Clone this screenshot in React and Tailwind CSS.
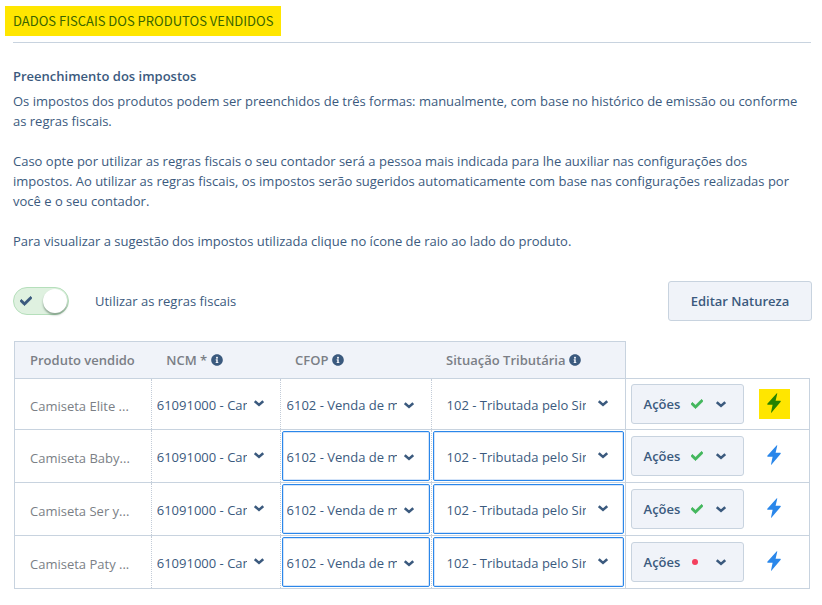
import React from 'react';
import { FaCheck, FaInfoCircle } from 'react-icons/fa';

const PRODUCTS = [
	{ name: 'Camiseta Elite ...', ok: true, focused: false },
	{ name: 'Camiseta Baby...', ok: true, focused: true },
	{ name: 'Camiseta Ser y...', ok: true, focused: true },
	{ name: 'Camiseta Paty ...', ok: false, focused: true },
];

const Chevron = ({ className = '' }) => (
	<svg
		viewBox="0 0 10 7"
		className={`w-[10px] h-[7px] ${className}`}
		fill="none"
		stroke="currentColor"
		strokeWidth="2.5"
	>
		<path d="M0.8 1.2 L5 4.9 L9.2 1.2" />
	</svg>
);

const Bolt = () => (
	<svg viewBox="0 0 14 20" className="w-[14px] h-5" fill="currentColor">
		<path d="M9.8 0.2 L0.3 10.8 Q0 11.6 0.8 11.8 H5.6 L4 19.6 Q4.2 20 4.6 19.6 L13.7 8.8 Q14 8 13.2 7.8 H8.6 L10.3 0.4 Q10.2 0 9.8 0.2 Z" />
	</svg>
);

const Check = ({ className }) => (
	<FaCheck className={`size-3 ${className}`} stroke="currentColor" strokeWidth="30" />
);

const HeaderCell = ({ children, info }) => (
	<th
		scope="col"
		className="bg-[#f0f3f9] border-y border-[#c8d3df] px-[15px] text-left font-semibold text-[#7b7f86]"
	>
		<span className="flex items-center gap-1 whitespace-nowrap">
			{children}
			{info && <FaInfoCircle className="size-3 text-[#3b5a7e]" />}
		</span>
	</th>
);

const CellSelect = ({ label, value, focused, className, chevron }) => (
	<div className="relative h-[50px]">
		<select
			aria-label={label}
			className={`appearance-none w-full h-full border bg-transparent outline-none overflow-hidden pt-[2px] ${className} ${
				focused
					? 'border-[#2a87ea] ring-1 ring-inset ring-[#d5e4f8] rounded-[2px]'
					: 'border-transparent'
			}`}
		>
			<option>{value}</option>
		</select>
		<Chevron className={`absolute right-4 pointer-events-none ${chevron}`} />
	</div>
);

const ProductRow = ({ product, highlighted }) => (
	<tr className={highlighted ? 'h-[51px]' : 'h-[53px]'}>
		<td className="border border-r-0 border-[#c8d3df] pl-[15px] pt-1 text-[#7b7f86] whitespace-nowrap">
			{product.name}
		</td>
		<td className="border-y border-l border-y-[#c8d3df] border-l-[#c3ccd8] [border-left-style:dotted]">
			<CellSelect
				label="NCM"
				value="61091000 - Camisetas"
				className="pl-1 pr-8"
				chevron="top-[21px]"
			/>
		</td>
		<td className="border-y border-l border-y-[#c8d3df] border-l-[#c3ccd8] [border-left-style:dotted] px-px">
			<CellSelect
				label="CFOP"
				value="6102 - Venda de mercadoria"
				focused={product.focused}
				className="pl-1 pr-8"
				chevron="top-[23px]"
			/>
		</td>
		<td className="border-y border-l border-y-[#c8d3df] border-l-[#c3ccd8] [border-left-style:dotted] px-px">
			<CellSelect
				label="Situação Tributária"
				value="102 - Tributada pelo Simples Nacional"
				focused={product.focused}
				className="pl-[13px] pr-[37px]"
				chevron="top-[21px]"
			/>
		</td>
		<td className="border border-[#c8d3df] pl-[5px]">
			<div className="flex items-center gap-[15px]">
				<button
					type="button"
					className="flex items-center w-[113px] h-10 pl-3 rounded-[3px] border border-[#c8d3df] bg-[#f0f3f9] font-semibold"
				>
					<span className="w-[47px] text-left">Ações</span>
					<span className="flex w-[25px] items-center">
						{product.ok ? (
							<Check className="text-[#43b75d]" />
						) : (
							<span className="size-[6px] ml-px rounded-full bg-[#f43f5e]" />
						)}
					</span>
					<Chevron />
				</button>
				<button
					type="button"
					aria-label="Ver sugestão dos impostos"
					className={`flex items-center justify-center w-[31px] h-[30px] pb-[2px] ${
						highlighted ? 'bg-[#ffe600] text-[#268300]' : 'text-[#2a87ea]'
					}`}
				>
					<Bolt />
				</button>
			</div>
		</td>
	</tr>
);

const App = () => (
	<main className="bg-white pl-[13px] pr-[11px] pt-[6px] pb-4 text-[13px] leading-5 text-[#3b5a7e] font-['Open_Sans',sans-serif]">
		<header className="border-b border-[#c8d3df] pb-[6px]">
			<h1 className="-ml-2 w-fit h-[30px] px-2 bg-[#ffe600] text-[13px] leading-[30px] text-[#3a6400] font-['Noto_Sans_CJK_SC',sans-serif]">
				DADOS FISCAIS DOS PRODUTOS VENDIDOS
			</h1>
		</header>

		<section className="pt-[23px] pr-2">
			<h2 className="font-semibold mb-[5px]">Preenchimento dos impostos</h2>
			<p className="mb-5">
				Os impostos dos produtos podem ser preenchidos de três formas: manualmente, com base no
				histórico de emissão ou conforme as regras fiscais.
			</p>
			<p className="mb-5">
				Caso opte por utilizar as regras fiscais o seu contador será a pessoa mais indicada para lhe
				auxiliar nas configurações dos impostos. Ao utilizar as regras fiscais, os impostos serão
				sugeridos automaticamente com base nas configurações realizadas por você e o seu contador.
			</p>
			<p>
				Para visualizar a sugestão dos impostos utilizada clique no ícone de raio ao lado do
				produto.
			</p>
		</section>

		<div className="flex items-center justify-between mt-[30px]">
			<label className="flex items-center gap-[26px] cursor-pointer">
				<input type="checkbox" defaultChecked className="peer sr-only" />
				<span className="flex items-center justify-between w-14 h-7 pl-[6px] pr-px rounded-full border border-[#b5dfbb] bg-[#dff1e0]">
					<Check className="text-[#3b5a7e]" />
					<span className="size-6 rounded-full bg-white shadow-[0px_2px_2px_rgba(60,90,70,0.5)]" />
				</span>
				Utilizar as regras fiscais
			</label>
			<button
				type="button"
				className="h-10 w-36 -mr-px rounded-[3px] border border-[#c8d3df] bg-[#f0f3f9] font-semibold"
			>
				Editar Natureza
			</button>
		</div>

		<div className="pl-px pr-px mt-5">
			<table className="w-full table-fixed border-collapse">
				<colgroup>
					<col className="w-[17.2%]" />
					<col className="w-[16.2%]" />
					<col className="w-[19%]" />
					<col className="w-[24.4%]" />
					<col />
				</colgroup>
				<thead>
					<tr className="h-[37px] border-l border-[#c8d3df]">
						<HeaderCell>Produto vendido</HeaderCell>
						<HeaderCell info>NCM *</HeaderCell>
						<HeaderCell info>CFOP</HeaderCell>
						<HeaderCell info>Situação Tributária</HeaderCell>
						<td className="border-l border-[#c8d3df]" />
					</tr>
				</thead>
				<tbody>
					{PRODUCTS.map((product, i) => (
						<ProductRow key={product.name} product={product} highlighted={i === 0} />
					))}
				</tbody>
			</table>
		</div>
	</main>
);

export default App;
